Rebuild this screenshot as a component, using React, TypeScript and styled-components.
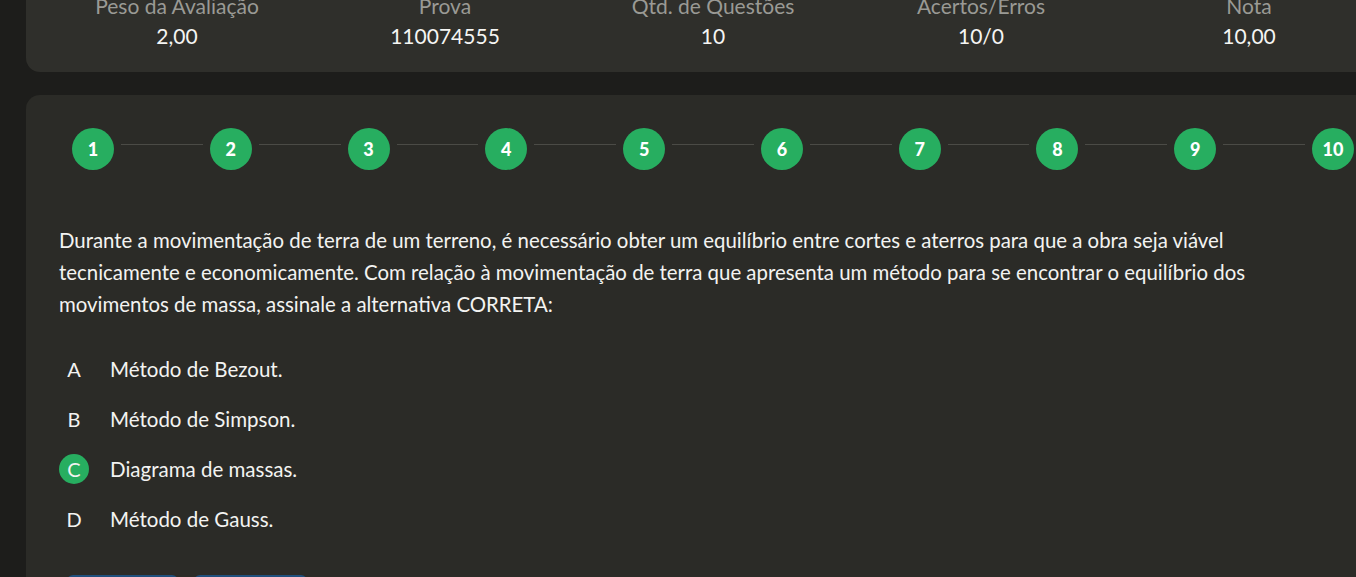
import React from "react";
import styled, { createGlobalStyle } from "styled-components";

const Global = createGlobalStyle`
  html, body { margin: 0; padding: 0; }
  body {
    background: #1d1d1b;
    overflow: hidden;
    font-family: "Lato", "Open Sans", sans-serif;
    color: #f2f2f0;
  }
`;

const Page = styled.div`
  width: 1400px;
  padding-left: 26px;
  box-sizing: border-box;
  display: flex;
  flex-direction: column;
  gap: 23px;
`;

const SummaryCard = styled.div`
  margin-top: -13px;
  background: #2f2f2b;
  border-radius: 0 0 14px 14px;
  padding: 7px 17px 23px;
  display: grid;
  grid-template-columns: repeat(5, 1fr);
`;

const Stat = styled.div`
  display: flex;
  flex-direction: column;
  align-items: center;
  gap: 5px;
`;

const StatLabel = styled.span`
  font-size: 21px;
  line-height: 24px;
  color: #9a9a95;
`;

const StatValue = styled.span`
  font-size: 21px;
  line-height: 26px;
  color: #f5f5f3;
`;

const QuestionCard = styled.div`
  background: #2b2b27;
  border-radius: 14px 14px 0 0;
  padding: 33px 33px 0;
  min-height: 520px;
`;

const Stepper = styled.div`
  display: flex;
  align-items: center;
  margin: 0 13px;
`;

const StepCircle = styled.div`
  width: 42px;
  height: 42px;
  flex: none;
  border-radius: 50%;
  background: #27ae60;
  color: #fff;
  font-weight: 900;
  font-size: 18px;
  display: flex;
  align-items: center;
  justify-content: center;
`;

const StepLine = styled.div`
  flex: 1;
  height: 1px;
  background: #4b4b46;
  margin: 0 7px 9px;
`;

const Statement = styled.p`
  margin: 54px 0 0;
  font-size: 20.4px;
  line-height: 32px;
  max-width: 1240px;
  color: #f3f3f1;
`;

const Options = styled.div`
  margin-top: 34px;
  display: flex;
  flex-direction: column;
  gap: 20px;
`;

const OptionRow = styled.div`
  display: flex;
  align-items: center;
  gap: 21px;
  font-size: 20.5px;
  color: #f3f3f1;
`;

const Marker = styled.span<{ $selected?: boolean }>`
  width: 30px;
  height: 30px;
  flex: none;
  border-radius: 50%;
  display: flex;
  align-items: center;
  justify-content: center;
  font-size: 20px;
  background: ${(p) => (p.$selected ? "#27ae60" : "transparent")};
  color: #f3f3f1;
`;

const Actions = styled.div`
  margin-top: 41px;
  padding-left: 8px;
  display: flex;
  gap: 16px;
`;

const ActionButton = styled.div<{ $w: number }>`
  width: ${(p) => p.$w}px;
  height: 40px;
  border-radius: 6px;
  background: #1f4f7d;
`;

const stats = [
  ["Peso da Avaliação", "2,00"],
  ["Prova", "110074555"],
  ["Qtd. de Questões", "10"],
  ["Acertos/Erros", "10/0"],
  ["Nota", "10,00"],
];

const options = [
  ["A", "Método de Bezout."],
  ["B", "Método de Simpson."],
  ["C", "Diagrama de massas."],
  ["D", "Método de Gauss."],
];

export default function App() {
  return (
    <>
      <Global />
      <Page>
        <SummaryCard>
          {stats.map(([l, v]) => (
            <Stat key={l}>
              <StatLabel>{l}</StatLabel>
              <StatValue>{v}</StatValue>
            </Stat>
          ))}
        </SummaryCard>
        <QuestionCard>
          <Stepper>
            {Array.from({ length: 10 }, (_, i) => (
              <React.Fragment key={i}>
                {i > 0 && <StepLine />}
                <StepCircle>{i + 1}</StepCircle>
              </React.Fragment>
            ))}
          </Stepper>
          <Statement>
            Durante a movimentação de terra de um terreno, é necessário obter um equilíbrio entre cortes e aterros para que a obra seja viável tecnicamente e economicamente. Com relação à movimentação de terra que apresenta um método para se encontrar o equilíbrio dos movimentos de massa, assinale a alternativa CORRETA:
          </Statement>
          <Options>
            {options.map(([k, t]) => (
              <OptionRow key={k}>
                <Marker $selected={k === "C"}>{k}</Marker>
                <span>{t}</span>
              </OptionRow>
            ))}
          </Options>
          <Actions>
            <ActionButton $w={111} />
            <ActionButton $w={113} />
          </Actions>
        </QuestionCard>
      </Page>
    </>
  );
}
